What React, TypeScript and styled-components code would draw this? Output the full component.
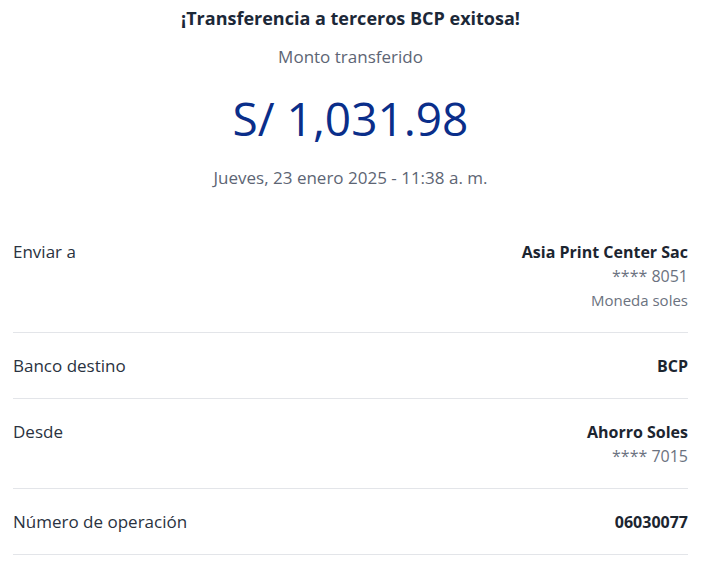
import React from "react";
import styled, { createGlobalStyle } from "styled-components";

const GlobalStyle = createGlobalStyle`
  body {
    margin: 0;
    background: #ffffff;
    font-family: "Open Sans", "Noto Sans", sans-serif;
  }
`;

const Page = styled.main`
  padding: 0 27px 0 13px;
`;

const Header = styled.header`
  display: flex;
  flex-direction: column;
  align-items: center;
  text-align: center;
  padding-top: 6px;
`;

const Title = styled.h1`
  margin: 0;
  font-size: 18px;
  line-height: 24px;
  font-weight: 700;
  color: #1c2838;
`;

const Subtitle = styled.p`
  margin: 15px 0 0;
  font-size: 17px;
  line-height: 24px;
  color: #5d6574;
`;

const Amount = styled.p`
  margin: 21px 0 0;
  font-size: 46px;
  line-height: 56px;
  color: #0a2e8a;
`;

const DateText = styled.p`
  margin: 20px 0 0;
  font-size: 17px;
  line-height: 24px;
  color: #5d6574;
`;

const DetailList = styled.section`
  margin-top: 29px;
`;

const Row = styled.div`
  display: flex;
  justify-content: space-between;
  align-items: flex-start;
  padding: 21px 0 20px;
  border-bottom: 1px solid #e3e5e9;
`;

const Label = styled.span`
  font-size: 17px;
  line-height: 24px;
  color: #2a3240;
`;

const Values = styled.div`
  display: flex;
  flex-direction: column;
  align-items: flex-end;
  text-align: right;
`;

const Value = styled.span<{ $muted?: boolean; $small?: boolean }>`
  font-size: ${(p) => (p.$small ? "15px" : "16px")};
  line-height: 24px;
  font-weight: ${(p) => (p.$muted ? 400 : 700)};
  color: ${(p) => (p.$muted ? "#6b7280" : "#1c2530")};
`;

const details = [
  {
    id: 1,
    label: "Enviar a",
    values: [
      { text: "Asia Print Center Sac" },
      { text: "**** 8051", muted: true },
      { text: "Moneda soles", muted: true, small: true },
    ],
  },
  { id: 2, label: "Banco destino", values: [{ text: "BCP" }] },
  {
    id: 3,
    label: "Desde",
    values: [{ text: "Ahorro Soles" }, { text: "**** 7015", muted: true }],
  },
  { id: 4, label: "Número de operación", values: [{ text: "06030077" }] },
];

const App = () => {
  return (
    <>
      <GlobalStyle />
      <Page>
        <Header>
          <Title>¡Transferencia a terceros BCP exitosa!</Title>
          <Subtitle>Monto transferido</Subtitle>
          <Amount>S/ 1,031.98</Amount>
          <DateText>Jueves, 23 enero 2025 - 11:38 a. m.</DateText>
        </Header>
        <DetailList>
          {details.map((row) => (
            <Row key={row.id}>
              <Label>{row.label}</Label>
              <Values>
                {row.values.map((v, i) => (
                  <Value key={i} $muted={v.muted} $small={v.small}>
                    {v.text}
                  </Value>
                ))}
              </Values>
            </Row>
          ))}
        </DetailList>
      </Page>
    </>
  );
};

export default App;
